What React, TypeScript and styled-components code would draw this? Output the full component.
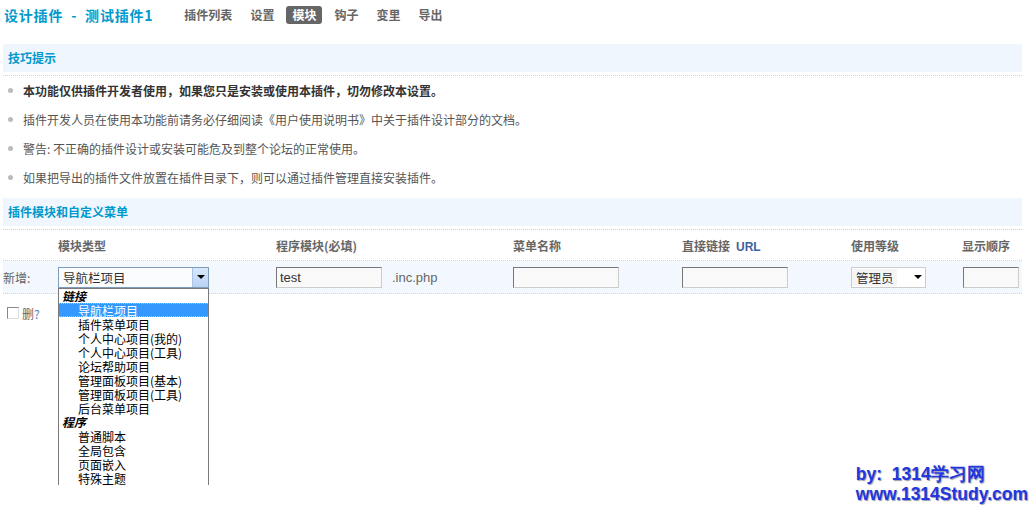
import React from 'react';
import styled, { createGlobalStyle } from 'styled-components';

const GlobalStyle = createGlobalStyle`
  html, body {
    margin: 0;
    height: 505px;
    overflow: hidden;
  }
  body {
    background: #fff;
    font: 12px "Noto Sans CJK SC", "Liberation Sans", sans-serif;
    color: #666;
  }
`;

const Page = styled.div`
  position: relative;
  width: 1031px;
  height: 505px;
  overflow: hidden;
`;

const TopBar = styled.div`
  display: flex;
  align-items: center;
  height: 30px;
  padding-left: 4px;
`;

const Title = styled.h3`
  margin: 0;
  font-size: 14px;
  font-weight: bold;
  letter-spacing: 0.8px;
  color: #0099cc;
  white-space: pre;
`;

const Nav = styled.ul`
  display: flex;
  align-items: center;
  list-style: none;
  margin: 0 0 0 22px;
  padding: 0;
`;

const NavItem = styled.li<{ $active?: boolean }>`
  margin: 0 3px;
  padding: 0 6px;
  height: 18px;
  line-height: 18px;
  border-radius: 3px;
  font-weight: bold;
  color: ${p => (p.$active ? '#fff' : '#666')};
  background: ${p => (p.$active ? '#666' : 'transparent')};
`;

const Content = styled.div`
  width: 1019px;
  margin: 14px 0 0 3px;
`;

const SectionHead = styled.div<{ $gap?: number }>`
  margin-top: ${p => p.$gap ?? 0}px;
  height: 28px;
  line-height: 28px;
  padding-left: 5px;
  background: #f0f6fd;
  color: #0099cc;
  font-weight: bold;
  margin-bottom: 3px;
`;

const Dotted = styled.div`
  border-top: 1px dotted #c5d7e6;
`;

const TipList = styled.ul`
  list-style: none;
  margin: 0;
  padding: 0;
`;

const Tip = styled.li<{ $strong?: boolean }>`
  display: flex;
  align-items: center;
  height: 29px;
  color: ${p => (p.$strong ? '#333' : '#555')};
  font-weight: ${p => (p.$strong ? 'bold' : 'normal')};
  &::before {
    content: '';
    width: 5px;
    height: 5px;
    border-radius: 50%;
    background: #bbb;
    margin: 0 10px 0 5px;
  }
`;

const Grid = styled.div<{ $bg?: boolean; $h: number }>`
  display: grid;
  grid-template-columns: 55px 218px 237px 169px 169px 111px 1fr;
  align-items: center;
  height: ${p => p.$h}px;
  background: ${p => (p.$bg ? '#f2f8fd' : 'transparent')};
  border-bottom: 1px dotted #c5d7e6;
`;

const HeadCell = styled.div`
  font-weight: bold;
  color: #666;
`;

const Url = styled.span`
  font-family: "Liberation Sans", Arial, sans-serif;
  color: #3f5f9c;
  margin-left: 6px;
`;

const Cell = styled.div`
  position: relative;
  display: flex;
  align-items: center;
`;

const TextInput = styled.input<{ $w: number }>`
  box-sizing: border-box;
  width: ${p => p.$w}px;
  height: 21px;
  padding: 0 3px;
  border: 1px solid;
  border-color: #777 #ccc #ccc #777;
  background: #f9f9f9;
  font: 13px "Liberation Sans", Arial, sans-serif;
  color: #333;
  outline: none;
`;

const Suffix = styled.span`
  margin-left: 10px;
  font: 13px "Liberation Sans", Arial, sans-serif;
  color: #666;
`;

const SelectBox = styled.div<{ $w: number; $xp?: boolean }>`
  box-sizing: border-box;
  display: flex;
  align-items: stretch;
  width: ${p => p.$w}px;
  height: 21px;
  border: 1px solid ${p => (p.$xp ? '#7f9db9' : '#ccc')};
  background: ${p => (p.$xp ? '#fbfcfd' : '#fff')};
  color: #333;
`;

const SelectText = styled.span<{ $xp?: boolean }>`
  flex: 1;
  display: flex;
  align-items: center;
  padding-left: 4px;
  font-size: 12.5px;
  background: ${p => (p.$xp ? 'transparent' : 'linear-gradient(to right, #f5f5f5 78%, #fff 78%)')};
  margin: 1px 0;
`;

const Arrow = styled.span<{ $xp?: boolean }>`
  width: 15px;
  display: flex;
  align-items: center;
  justify-content: center;
  background: ${p => (p.$xp ? 'linear-gradient(#d9e8fb, #b8d2f6)' : '#fff')};
  border-left: ${p => (p.$xp ? '1px solid #a9c4e9' : 'none')};
  &::after {
    content: '';
    border-left: 4px solid transparent;
    border-right: 4px solid transparent;
    border-top: 4px solid #000;
  }
`;

const DropList = styled.ul`
  position: absolute;
  top: 21px;
  left: 0;
  box-sizing: border-box;
  width: 151px;
  height: 197px;
  margin: 0;
  padding: 0;
  list-style: none;
  background: #fff;
  border: 1px solid #7a7a7a;
  z-index: 5;
`;

const Group = styled.li`
  height: 14px;
  line-height: 14px;
  padding-left: 3px;
  font-weight: bold;
  font-style: italic;
  color: #000;
`;

const Option = styled.li<{ $sel?: boolean }>`
  box-sizing: border-box;
  height: 14px;
  line-height: 13px;
  padding-left: 19px;
  color: ${p => (p.$sel ? '#fff' : '#000')};
  background: ${p => (p.$sel ? '#3399ff' : '#fff')};
  border: 1px dotted ${p => (p.$sel ? '#e0c080' : 'transparent')};
  border-left: 0;
  border-right: 0;
`;

const DeleteRow = styled.label`
  display: flex;
  align-items: center;
  height: 38px;
  padding-left: 4px;
  color: #666;
  font-size: 12px;
`;

const Check = styled.span`
  box-sizing: border-box;
  width: 12px;
  height: 12px;
  border: 1px solid;
  border-color: #888 #ddd #ddd #888;
  background: #fff;
  margin-right: 3px;
`;

const Q = styled.span`
  color: #5a7fbf;
`;

const Watermark = styled.div`
  position: absolute;
  right: 3px;
  bottom: 1px;
  font: bold 17.5px "Liberation Sans", Arial, sans-serif;
  color: #2138e0;
  text-shadow: 1px 1px 1px #99a;
  line-height: 20px;
`;

const WmLine = styled.div`
  white-space: nowrap;
`;

const linkOpts = ['导航栏项目', '插件菜单项目', '个人中心项目(我的)', '个人中心项目(工具)', '论坛帮助项目', '管理面板项目(基本)', '管理面板项目(工具)', '后台菜单项目'];
const progOpts = ['普通脚本', '全局包含', '页面嵌入', '特殊主题'];

export default function App() {
  return (
    <Page>
      <GlobalStyle />
      <TopBar>
        <Title>{'设计插件  -  测试插件1'}</Title>
        <Nav>
          <NavItem>插件列表</NavItem>
          <NavItem>设置</NavItem>
          <NavItem $active>模块</NavItem>
          <NavItem>钩子</NavItem>
          <NavItem>变里</NavItem>
          <NavItem>导出</NavItem>
        </Nav>
      </TopBar>
      <Content>
        <SectionHead>技巧提示</SectionHead>
        <Dotted />
        <TipList>
          <Tip $strong>本功能仅供插件开发者使用，如果您只是安装或使用本插件，切勿修改本设置。</Tip>
          <Tip>插件开发人员在使用本功能前请务必仔细阅读《用户使用说明书》中关于插件设计部分的文档。</Tip>
          <Tip>警告: 不正确的插件设计或安装可能危及到整个论坛的正常使用。</Tip>
          <Tip>如果把导出的插件文件放置在插件目录下，则可以通过插件管理直接安装插件。</Tip>
        </TipList>
        <SectionHead $gap={6}>插件模块和自定义菜单</SectionHead>
        <Dotted />
        <Grid $h={30}>
          <HeadCell />
          <HeadCell>模块类型</HeadCell>
          <HeadCell>程序模块(必填)</HeadCell>
          <HeadCell>菜单名称</HeadCell>
          <HeadCell>直接链接<Url>URL</Url></HeadCell>
          <HeadCell>使用等级</HeadCell>
          <HeadCell>显示顺序</HeadCell>
        </Grid>
        <Grid $h={32} $bg>
          <Cell>新增:</Cell>
          <Cell>
            <SelectBox $w={151} $xp>
              <SelectText $xp>导航栏项目</SelectText>
              <Arrow $xp />
            </SelectBox>
            <DropList>
              <Group>链接</Group>
              {linkOpts.map((o, i) => (
                <Option key={o} $sel={i === 0}>{o}</Option>
              ))}
              <Group>程序</Group>
              {progOpts.map(o => (
                <Option key={o}>{o}</Option>
              ))}
            </DropList>
          </Cell>
          <Cell>
            <TextInput $w={106} defaultValue="test" />
            <Suffix>.inc.php</Suffix>
          </Cell>
          <Cell><TextInput $w={106} /></Cell>
          <Cell><TextInput $w={106} /></Cell>
          <Cell>
            <SelectBox $w={75}>
              <SelectText>管理员</SelectText>
              <Arrow />
            </SelectBox>
          </Cell>
          <Cell><TextInput $w={56} style={{ marginLeft: 1 }} /></Cell>
        </Grid>
        <DeleteRow>
          <Check />删<Q>?</Q>
        </DeleteRow>
      </Content>
      <Watermark>
        <WmLine>by:&nbsp; 1314学习网</WmLine>
        <WmLine>www.1314Study.com</WmLine>
      </Watermark>
    </Page>
  );
}
